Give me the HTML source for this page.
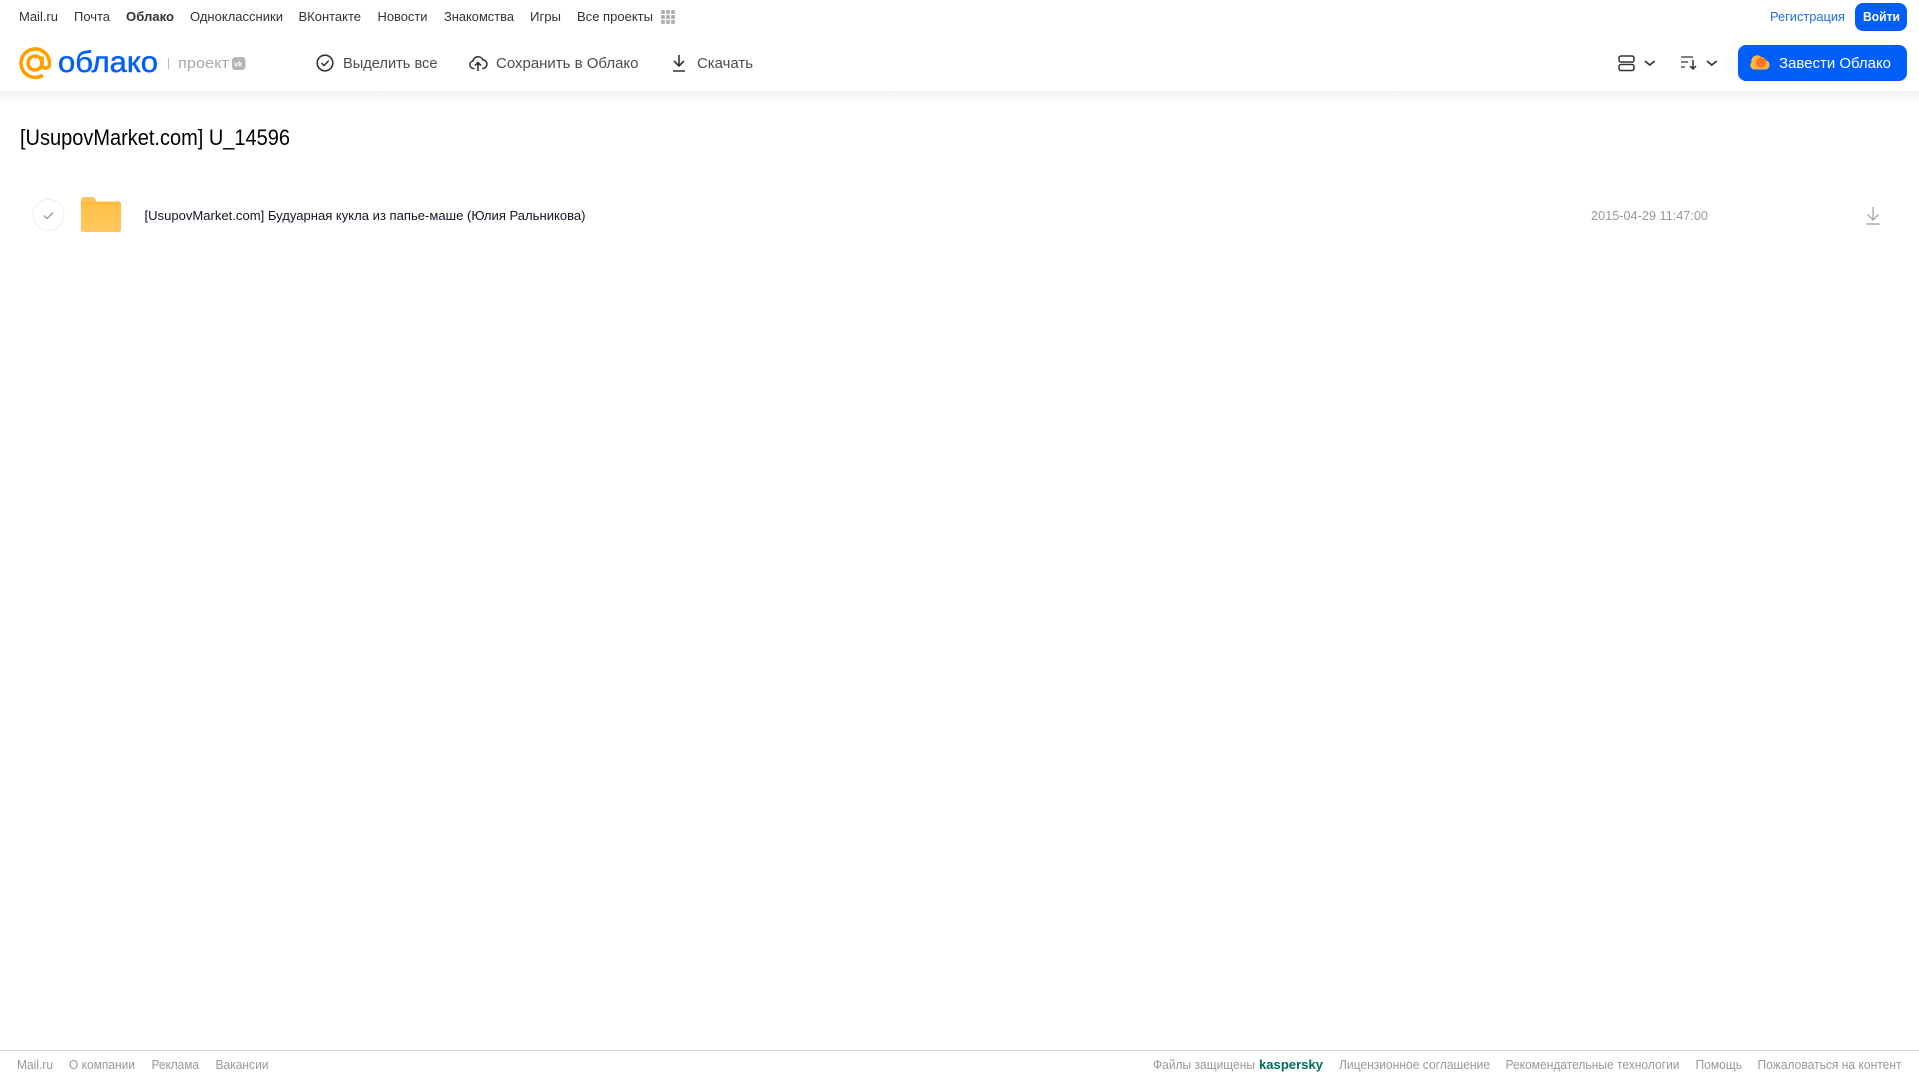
<!DOCTYPE html>
<html lang="ru">
<head>
<meta charset="utf-8">
<title>[UsupovMarket.com] U_14596</title>
<style>
html,body{margin:0;padding:0;background:#fff;width:1919px;height:1079px;overflow:hidden}
svg{display:block;position:absolute;left:0;top:0}
text{font-family:"Liberation Sans",Arial,sans-serif}
.n{font-size:13px;fill:#333}
.t{font-size:15px;fill:#4d4d4d}
.f{font-size:12.500px;fill:#999}
</style>
</head>
<body>
<svg width="1919" height="1079" viewBox="0 0 1919 1079" xmlns="http://www.w3.org/2000/svg">
<defs>
<linearGradient id="sh" x1="0" y1="0" x2="0" y2="1"><stop offset="0" stop-color="#f3f3f3"/><stop offset="1" stop-color="#fff"/></linearGradient>
<linearGradient id="fo" x1="0" y1="0" x2="0" y2="1"><stop offset="0" stop-color="#ffbf47"/><stop offset="1" stop-color="#ffc95f"/></linearGradient>
</defs>
<rect x="0" y="91" width="1919" height="13" fill="url(#sh)"/>

<!-- top nav -->
<text class="n" x="19" y="21" textLength="39" lengthAdjust="spacingAndGlyphs">Mail.ru</text>
<text class="n" x="74" y="21" textLength="36" lengthAdjust="spacingAndGlyphs">Почта</text>
<text class="n" x="126" y="21" textLength="48" lengthAdjust="spacingAndGlyphs" font-weight="700">Облако</text>
<text class="n" x="190" y="21" textLength="93" lengthAdjust="spacingAndGlyphs">Одноклассники</text>
<text class="n" x="298.500" y="21" textLength="62.500" lengthAdjust="spacingAndGlyphs">ВКонтакте</text>
<text class="n" x="377.500" y="21" textLength="50" lengthAdjust="spacingAndGlyphs">Новости</text>
<text class="n" x="444" y="21" textLength="70" lengthAdjust="spacingAndGlyphs">Знакомства</text>
<text class="n" x="530" y="21" textLength="31" lengthAdjust="spacingAndGlyphs">Игры</text>
<text class="n" x="577" y="21" textLength="76" lengthAdjust="spacingAndGlyphs">Все проекты</text>
<g fill="#b0b0b0">
<rect x="661" y="10" width="4" height="4" rx="1.200"/><rect x="666" y="10" width="4" height="4" rx="1.200"/><rect x="671" y="10" width="4" height="4" rx="1.200"/>
<rect x="661" y="15" width="4" height="4" rx="1.200"/><rect x="666" y="15" width="4" height="4" rx="1.200"/><rect x="671" y="15" width="4" height="4" rx="1.200"/>
<rect x="661" y="20" width="4" height="4" rx="1.200"/><rect x="666" y="20" width="4" height="4" rx="1.200"/><rect x="671" y="20" width="4" height="4" rx="1.200"/>
</g>
<text x="1770" y="21" font-size="13" fill="#1f6fe0" textLength="75" lengthAdjust="spacingAndGlyphs">Регистрация</text>
<rect x="1855" y="3" width="52" height="28" rx="8" fill="#005ff9"/>
<text x="1863" y="21" font-size="13" font-weight="700" fill="#fff" textLength="37" lengthAdjust="spacingAndGlyphs">Войти</text>

<!-- logo -->
<path d="M42 56.500v8a3.700 3.700 0 0 0 7.400 0V63a14.200 14.200 0 1 0-6.600 12.200" fill="none" stroke="#ffa000" stroke-width="3.600"/>
<circle cx="35" cy="63" r="7" fill="none" stroke="#ffa000" stroke-width="3.600"/>
<text x="58" y="72" font-size="30" fill="#005ff9" stroke="#005ff9" stroke-width=".5" textLength="100" lengthAdjust="spacingAndGlyphs">облако</text>
<rect x="168" y="58" width="1" height="11" fill="#bbb"/>
<text x="178" y="68" font-size="15" fill="#aaa" textLength="51" lengthAdjust="spacingAndGlyphs">проект</text>
<rect x="232" y="57" width="13.500" height="13" rx="3.500" fill="#b5b5b5"/>
<text x="234" y="66.500" font-size="7.500" font-weight="700" fill="#fff">vk</text>

<!-- toolbar -->
<circle cx="325" cy="63" r="7.800" fill="none" stroke="#333" stroke-width="1.600"/>
<path d="M321.500 63l2.600 2.600 4.600-5" fill="none" stroke="#333" stroke-width="1.500"/>
<text class="t" x="343" y="68" textLength="94.500" lengthAdjust="spacingAndGlyphs">Выделить все</text>

<path d="M474.500 68.500h-1a3.800 3.800 0 0 1-.6-7.500 5.300 5.300 0 0 1 10-1.200 4.400 4.400 0 0 1 .5 8.700h-1.200" fill="none" stroke="#333" stroke-width="1.600"/>
<path d="M478 71v-8.500m-3 3l3-3 3 3" fill="none" stroke="#333" stroke-width="1.600"/>
<text class="t" x="496" y="68" textLength="142.500" lengthAdjust="spacingAndGlyphs">Сохранить в Облако</text>

<path d="M679 55v11m-5-5l5 5 5-5M673 71h12" fill="none" stroke="#333" stroke-width="1.600"/>
<text class="t" x="697" y="68" textLength="56" lengthAdjust="spacingAndGlyphs">Скачать</text>

<!-- view & sort -->
<rect x="1619" y="56" width="15" height="6" rx="2" fill="none" stroke="#333" stroke-width="1.500"/>
<rect x="1619" y="64.500" width="15" height="6" rx="2" fill="none" stroke="#333" stroke-width="1.500"/>
<path d="M1645 61l4.800 4 4.800-4" fill="none" stroke="#333" stroke-width="1.700"/>
<path d="M1681 57h12M1681 62h7M1681 67h4" fill="none" stroke="#333" stroke-width="1.300"/>
<path d="M1693 60v9m-3-3l3 3 3-3" fill="none" stroke="#333" stroke-width="1.500"/>
<path d="M1707 61l4.800 4 4.800-4" fill="none" stroke="#333" stroke-width="1.700"/>

<rect x="1738" y="45" width="169" height="36" rx="8" fill="#005ff9"/>
<path d="M1754.500 69.500a4.300 4.300 0 0 1-3-7.300 5.500 5.500 0 0 1 4.500-6.700 4.500 4.500 0 0 1 4.800 1.300 6 6 0 0 1 5 3.500 4.700 4.700 0 0 1 .2 9.200z" fill="#ffb23f"/>
<circle cx="1761" cy="62.500" r="5" fill="#ff6a1f" opacity=".85"/>
<text x="1779" y="68" font-size="15" fill="#fff" textLength="112" lengthAdjust="spacingAndGlyphs">Завести Облако</text>

<!-- title -->
<text x="20" y="145" font-size="22" fill="#000" textLength="270" lengthAdjust="spacingAndGlyphs">[UsupovMarket.com] U_14596</text>

<!-- row -->
<circle cx="48.500" cy="215" r="15.500" fill="#fff" stroke="#eee"/>
<path d="M44 215.500l3.200 3 5.800-6" fill="none" stroke="#999" stroke-width="1.300"/>
<path d="M83 197h9c2 0 3 1 4 3l1 2H83z" fill="#ffbe4f"/>
<rect x="81" y="197" width="14" height="10" rx="2.500" fill="#ffc760"/>
<rect x="81" y="201.500" width="40" height="30.500" rx="2.500" fill="#ffb93c"/>
<rect x="81" y="205" width="40" height="27" rx="2.500" fill="url(#fo)"/>
<text x="144.500" y="220" font-size="13" fill="#1c1024" textLength="441" lengthAdjust="spacingAndGlyphs">[UsupovMarket.com] Будуарная кукла из папье-маше (Юлия Ральникова)</text>
<text x="1591" y="220" font-size="13" fill="#999" textLength="117" lengthAdjust="spacingAndGlyphs">2015-04-29 11:47:00</text>
<path d="M1873 207v13m-5.500-5.500l5.500 5.500 5.500-5.500M1866.500 224h13" fill="none" stroke="#aaa" stroke-width="1.400"/>

<!-- footer -->
<rect x="0" y="1050" width="1919" height="1" fill="#d9d9d9"/>
<text class="f" x="17" y="1069" textLength="36" lengthAdjust="spacingAndGlyphs">Mail.ru</text>
<text class="f" x="69" y="1069" textLength="66" lengthAdjust="spacingAndGlyphs">О компании</text>
<text class="f" x="151.500" y="1069" textLength="47.500" lengthAdjust="spacingAndGlyphs">Реклама</text>
<text class="f" x="215.500" y="1069" textLength="53" lengthAdjust="spacingAndGlyphs">Вакансии</text>
<text class="f" x="1153" y="1069" textLength="102" lengthAdjust="spacingAndGlyphs">Файлы защищены</text>
<text x="1259" y="1069" font-size="13" font-weight="700" fill="#006d5c" textLength="64" lengthAdjust="spacingAndGlyphs">kaspersky</text>
<text class="f" x="1339" y="1069" textLength="151" lengthAdjust="spacingAndGlyphs">Лицензионное соглашение</text>
<text class="f" x="1505.500" y="1069" textLength="174" lengthAdjust="spacingAndGlyphs">Рекомендательные технологии</text>
<text class="f" x="1695.500" y="1069" textLength="46.500" lengthAdjust="spacingAndGlyphs">Помощь</text>
<text class="f" x="1757.500" y="1069" textLength="144" lengthAdjust="spacingAndGlyphs">Пожаловаться на контент</text>
</svg>
</body>
</html>
